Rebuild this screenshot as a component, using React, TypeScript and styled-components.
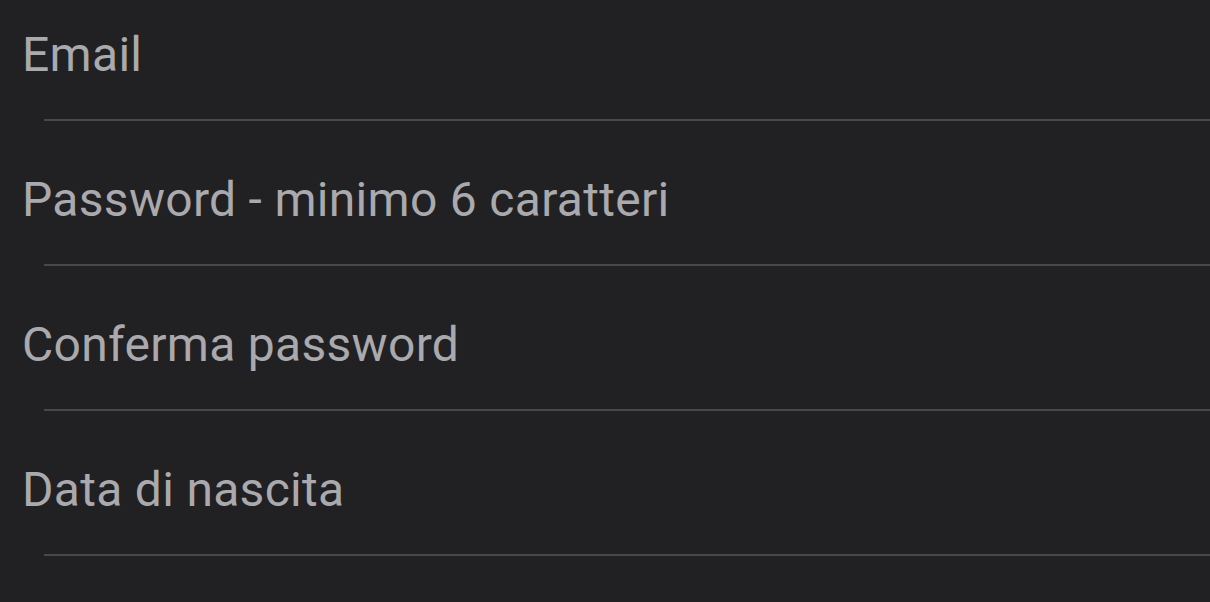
import React from "react";
import styled, { createGlobalStyle } from "styled-components";

const Global = createGlobalStyle`
  html, body { margin: 0; padding: 0; background: #212123; }
  body { font-family: Roboto, "Liberation Sans", sans-serif; }
`;

const Form = styled.div`
  display: flex;
  flex-direction: column;
  width: 1210px;
  height: 602px;
  background: #212123;
  overflow: hidden;
`;

const Field = styled.div<{ $first?: boolean }>`
  display: flex;
  flex-direction: column;
  padding-top: ${(p) => (p.$first ? "25px" : "49px")};
`;

const Label = styled.div`
  padding-left: 22px;
  height: 60px;
  font-size: 48px;
  line-height: 60px;
  color: #a9a9ae;
  letter-spacing: 0.3px;
  white-space: nowrap;
`;

const Divider = styled.div`
  margin-left: 44px;
  margin-top: 34px;
  height: 2px;
  background: #48484b;
`;

const labels = ["Email", "Password - minimo 6 caratteri", "Conferma password", "Data di nascita"];

export default function App() {
  return (
    <>
      <Global />
      <Form>
        {labels.map((l, i) => (
          <Field key={l} $first={i === 0}>
            <Label>{l}</Label>
            <Divider />
          </Field>
        ))}
      </Form>
    </>
  );
}
